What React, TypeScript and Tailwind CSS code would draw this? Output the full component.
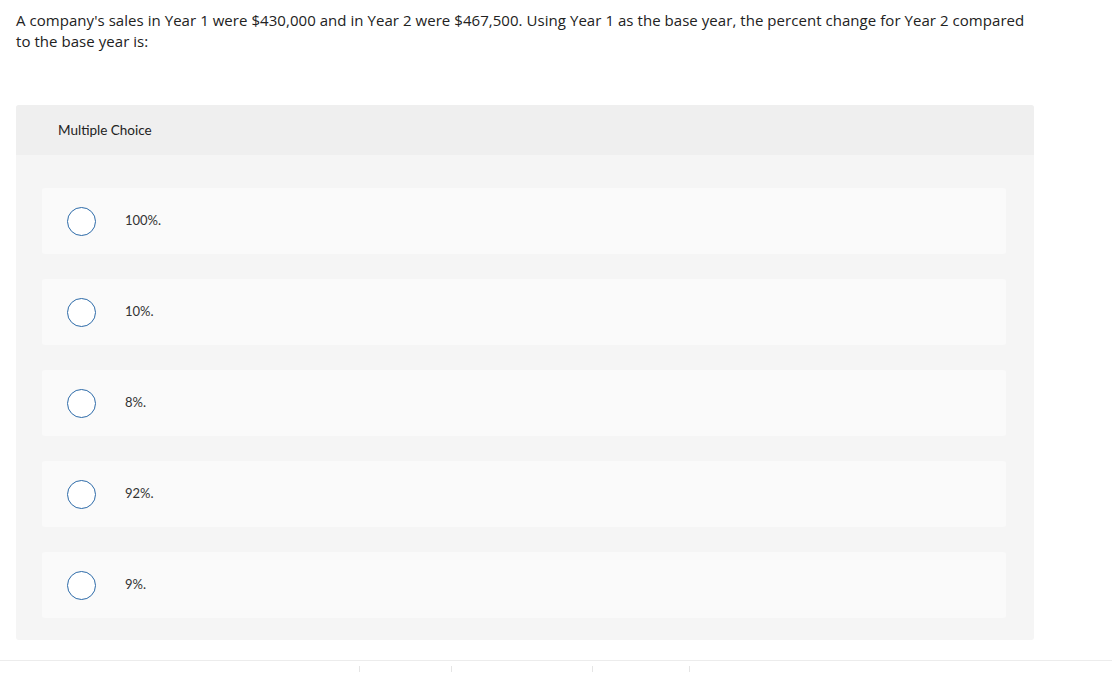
const OPTIONS = ['100%.', '10%.', '8%.', '92%.', '9%.'];

function Option({ label }: { label: string }) {
  return (
    <div className="flex h-[66px] items-center rounded-[3px] bg-[#fafafa] pl-[25px]">
      <span className="h-[29px] w-[29px] shrink-0 rounded-full border-[1.5px] border-[#2c6aa8] bg-white" />
      <span className="ml-[29px] text-[13px] text-[#333]">{label}</span>
    </div>
  );
}

export default function App() {
  return (
    <div
      className="min-h-[673px] bg-white text-[#333]"
      style={{ fontFamily: 'Lato, "Open Sans", "Liberation Sans", sans-serif' }}
    >
      <div className="px-4 pt-[10px]">
        <p
          className="max-w-[1014px] text-[15px] leading-[21px] tracking-[0.05px] text-[#222]"
          style={{ fontFamily: '"Open Sans", Lato, sans-serif' }}
        >
          A company's sales in Year 1 were $430,000 and in Year 2 were $467,500. Using Year 1 as the base year, the
          percent change for Year 2 compared to the base year is:
        </p>
      </div>

      <div className="ml-4 mt-[53px] w-[1018px] overflow-hidden rounded-[3px] bg-[#f5f5f5]">
        <div className="flex h-[50px] items-center bg-[#efefef] pl-[42px] text-[13.5px] text-[#222]">
          Multiple Choice
        </div>
        <div className="flex flex-col gap-[25px] pb-[22px] pl-[26px] pr-[28px] pt-[33px]">
          {OPTIONS.map((o) => (
            <Option key={o} label={o} />
          ))}
        </div>
      </div>

      <div className="mt-[20px] border-t border-[#ececec]">
        <div className="flex h-[11px]">
          <div className="w-[359px]" />
          <div className="mt-[5px] w-[92px] border-l border-[#e5e5e5]" />
          <div className="mt-[5px] w-[141px] border-l border-[#e5e5e5]" />
          <div className="mt-[5px] w-[97px] border-l border-[#e5e5e5]" />
          <div className="mt-[5px] w-[1px] border-l border-[#e5e5e5]" />
        </div>
      </div>
    </div>
  );
}
